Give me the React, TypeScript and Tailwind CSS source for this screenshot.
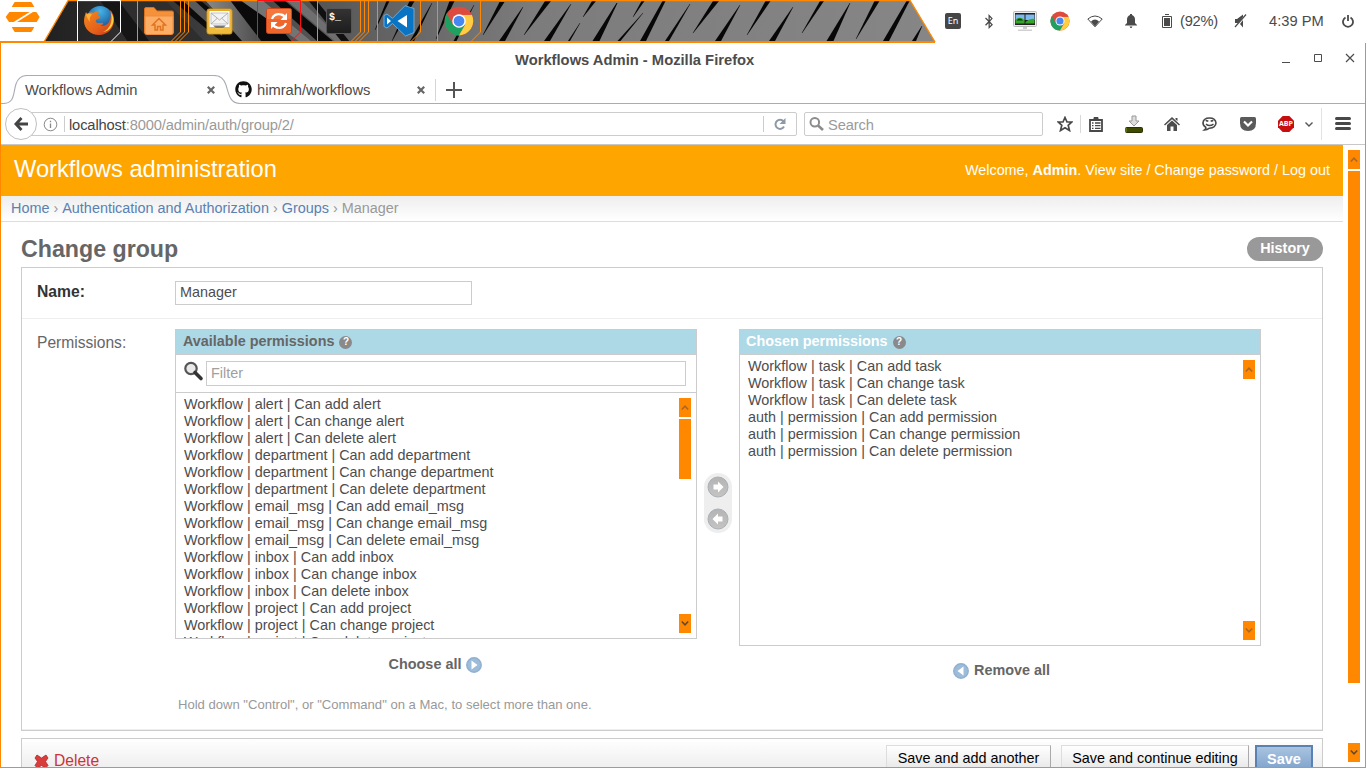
import React from "react";
import { FaBluetoothB, FaGithub } from "react-icons/fa";

const AVAILABLE = [
  "alert | Can add alert",
  "alert | Can change alert",
  "alert | Can delete alert",
  "department | Can add department",
  "department | Can change department",
  "department | Can delete department",
  "email_msg | Can add email_msg",
  "email_msg | Can change email_msg",
  "email_msg | Can delete email_msg",
  "inbox | Can add inbox",
  "inbox | Can change inbox",
  "inbox | Can delete inbox",
  "project | Can add project",
  "project | Can change project",
  "project | Can delete project",
].map((p) => "Workflow | " + p);

const CHOSEN = [
  "Workflow | task | Can add task",
  "Workflow | task | Can change task",
  "Workflow | task | Can delete task",
  "auth | permission | Can add permission",
  "auth | permission | Can change permission",
  "auth | permission | Can delete permission",
];

/* x at the bottom, y at the bottom, x at the top, y at the top, width at the bottom, width at the top */
const SLITS: number[][] = [
  [502, 41, 523, 7, 6, 0.5],
  [524, 35, 548, 1, 0.5, 6],
  [547, 41, 571, 4, 6, 0.5],
  [583, 17, 594, 1, 0.5, 4],
  [569, 41, 580, 23, 2, 0.5],
  [596, 41, 617, 3, 7, 1],
  [633, 17, 643, 1, 0.5, 3],
  [619, 41, 643, 13, 3, 0.5],
  [643, 41, 664, 1, 6, 3],
  [667, 41, 690, 4, 4, 0.5],
  [693, 33, 716, 1, 0.5, 6],
  [718, 41, 740, 5, 6, 0.5],
  [747, 35, 768, 1, 0.5, 5],
  [772, 41, 793, 7, 6, 0.5],
  [802, 33, 822, 1, 0.5, 4],
  [830, 41, 850, 3, 7, 0.5],
  [856, 39, 877, 1, 0.5, 5],
  [886, 41, 908, 1, 6, 3],
  [914, 41, 922, 26, 4, 0.5],
  [483, 35, 502, 2, 0.5, 5],
  [455, 41, 474, 5, 3, 0.5],
  [436, 39, 452, 1, 0.5, 5],
  [412, 41, 432, 3, 4, 0.5],
  [392, 41, 412, 1, 0.5, 5],
  [375, 30, 388, 1, 0.5, 3],
];

function Wallpaper() {
  return (
    <svg className="absolute inset-0" width="936" height="43" viewBox="0 0 936 43">
      <defs>
        <linearGradient id="wall" x1="0" x2="1" y1="0" y2="0">
          <stop offset="0" stopColor="#202020" />
          <stop offset="0.18" stopColor="#3c3c3c" />
          <stop offset="0.36" stopColor="#5f5f5f" />
          <stop offset="0.55" stopColor="#7c7c7c" />
          <stop offset="1" stopColor="#868686" />
        </linearGradient>
        <linearGradient id="band" x1="0" x2="1" y1="0" y2="0">
          <stop offset="0" stopColor="#8a8a8a" />
          <stop offset="1" stopColor="#4a4a4a" />
        </linearGradient>
      </defs>
      <polygon points="68.5,0 910,0 935,42 44,42" fill="url(#wall)" />
      <g>
        <polygon points="120,0 165,0 205,42 150,42" fill="#2e2e2e" />
        <polygon points="100,0 118,0 150,42 128,42" fill="#151515" />
        <polygon points="172,0 200,0 250,42 222,42" fill="#0c0c0c" />
        <polygon points="182,0 194,0 222,26 222,36" fill="#5a5a5a" />
        <polygon points="205,0 230,0 262,42 243,42" fill="url(#band)" />
        <polygon points="230,0 258,0 292,42 262,42" fill="#0a0a0a" />
        <polygon points="240,0 262,0 312,42 300,42" fill="#747474" />
        <polygon points="272,0 284,0 334,42 318,42" fill="#0a0a0a" />
        <polygon points="286,0 300,0 345,42 336,42" fill="#6f6f6f" />
        <polygon points="308,0 316,0 350,42 342,42" fill="#101010" />
      </g>
      {SLITS.map(([xb, yb, xt, yt, wb, wt], i) => (
        <polygon
          key={i}
          fill="#070707"
          points={`${xb - wb / 2},${yb} ${xb + wb / 2},${yb} ${xt + wt / 2},${yt} ${xt - wt / 2},${yt}`}
        />
      ))}
      <path d="M0 42H935" stroke="#ff8800" strokeWidth="2" />
      <path d="M68 0.5H910L935 42" stroke="#ff8800" strokeWidth="1.4" fill="none" />
      <path d="M68.5 0L44 42" stroke="#ff8800" strokeWidth="1.4" />
    </svg>
  );
}

function ZorinLogo() {
  return (
    <svg width="36" height="30" viewBox="0 0 108 90" className="mt-[2px] ml-[5px] shrink-0">
      <g fill="#ff8800">
        <path d="M29 0H79L88 15H20z" />
        <path d="M13 30H74L26 60H12L2 45z" />
        <path d="M84 30H94L104 45L95 60H36z" />
        <path d="M20 75H88L79 90H29z" />
      </g>
    </svg>
  );
}

function Frame({ color, copies = 1, children }: { color: string; copies?: number; children: React.ReactNode }) {
  return (
    <div className="relative flex h-[42px] w-[60px] shrink-0 items-start">
      <svg width="60" height="42" viewBox="0 0 60 42" className="absolute inset-0" fill="none" stroke={color}>
        <path d={copies > 1 ? "M0.5 0V41" : "M0.5 41V0.5H43.5V32L34 41.5"} />
        {copies > 1 && <path d="M43.5 0V32L34 41.5M47.5 0V32L38 41.5M51.5 0V32L42 41.5" />}
      </svg>
      <div className="relative flex h-[42px] w-[44px] items-center justify-center">{children}</div>
    </div>
  );
}

function FirefoxIcon() {
  return (
    <svg width="32" height="32" viewBox="0 0 32 32" className="mb-[2px]">
      <defs>
        <radialGradient id="ffb" cx="0.5" cy="0.2" r="0.8">
          <stop offset="0" stopColor="#45b5e8" />
          <stop offset="1" stopColor="#123f86" />
        </radialGradient>
        <linearGradient id="ffo" x1="0" y1="0" x2="1" y2="1">
          <stop offset="0" stopColor="#f58a1c" />
          <stop offset="0.6" stopColor="#e5601a" />
          <stop offset="1" stopColor="#c8341c" />
        </linearGradient>
      </defs>
      <circle cx="17" cy="15" r="13" fill="url(#ffb)" />
      <path d="M3 8C2 11 1 14 1 17C1 25 8 31 16 31C24.500 31 31 24.500 31 16C31 12 29.500 8 27 6C28.500 10 28 14 26.500 17C25 21 21 22.500 17.500 21.500C20 21 20.500 19.500 20 19C18 18 16 20 13.500 18.500C12.500 17.500 12.500 16.500 13.500 15.500L17 14C17.500 12.500 17 11.500 15.500 11.500C14.500 10 15 9 16.500 7.500C14 7 12 7.500 10.500 9C9 8.300 6 8.500 5 10C4 9.500 3.500 9 3 8z" fill="url(#ffo)" />
      <path d="M28 9C30 17 27 25 20 28C26 27.500 30.500 22 30.500 16C30.500 13 29.500 10.500 28 9z" fill="#ffcf3e" />
      <path d="M3 11C4 9.500 7 9 9 10.500C7 12 6 15 7 18C5 16 4 13 3 11z" fill="#fbb03b" />
    </svg>
  );
}

function FolderIcon() {
  return (
    <svg width="30" height="30" viewBox="0 0 30 30">
      <path d="M0.500 3Q0.500 1.500 2 1.500H10L13 5H28Q29.500 5 29.500 6.500V27H0.500z" fill="#f4913a" stroke="#d9701c" />
      <path d="M1 10H29V27Q29 28.500 27.500 28.500H2.500Q1 28.500 1 27z" fill="#fcae66" stroke="#ee8a3c" />
      <path d="M15 12.500L8.500 19H11V24H13.500V20.500H16.500V24H19V19H21.500z" fill="none" stroke="#df7420" strokeWidth="1.500" />
    </svg>
  );
}

function MailIcon() {
  return (
    <svg width="27" height="27" viewBox="0 0 27 27">
      <rect x="1" y="1" width="25" height="25" rx="2" fill="#f7c95a" stroke="#c98d13" />
      <rect x="3" y="2.500" width="21" height="17" fill="#fff" stroke="#e8a820" />
      <path d="M5 5H22V16H5z" fill="#f3f3f3" stroke="#c5c5c5" />
      <path d="M5 5L13.500 12L22 5M5 16L11 10.500M22 16L16 10.500" fill="none" stroke="#b0b0b0" />
      <path d="M2 19H8L10 21.500H17L19 19H25V25H2z" fill="#efbb3d" />
      <path d="M7 17.500H20L17 20H10z" fill="#777" />
    </svg>
  );
}

function SyncIcon() {
  return (
    <svg width="26" height="26" viewBox="0 0 26 26">
      <rect x="0.500" y="0.500" width="25" height="25" rx="2" fill="#f0652b" stroke="#c9471a" />
      <path d="M1 1H25V11H1z" fill="#f88a52" opacity="0.500" />
      <g fill="none" stroke="#fff" strokeWidth="2.300">
        <path d="M6 11C7 7 11 5.500 15 6.500Q17.500 7 19 9" />
        <path d="M20 15C19 19 15 20.500 11 19.500Q8.500 19 7 17" />
      </g>
      <path d="M21 5V12H14.500zM5 21V14H11.500z" fill="#fff" />
    </svg>
  );
}

function TerminalIcon() {
  return (
    <div className="flex h-[26px] w-[26px] items-start rounded-[2px] border border-[#555] bg-gradient-to-b from-[#333] to-[#1d1d1d] pl-[2px] pt-[3px] font-['Liberation_Mono',monospace] text-[10px] leading-[11px] font-bold text-white">
      $_
    </div>
  );
}

function VsCodeIcon() {
  return (
    <svg width="32" height="32" viewBox="0 0 32 32">
      <path d="M22 0.700L31 3.500V27.500L22.500 31L9.500 18.500L4 23L1 21.500V10.500L4 9L9.500 13.300z" fill="#0a74c4" stroke="#7db6df" strokeWidth="0.800" />
      <path d="M4 12.500V19.500L8 16zM14.500 16L24 10V22.500z" fill="#fff" />
    </svg>
  );
}

function ChromeIcon({ size }: { size: number }) {
  return (
    <svg width={size} height={size} viewBox="0 0 48 48">
      <circle cx="24" cy="24" r="23" fill="#dd4b3e" />
      <path d="M4.500 12A23 23 0 0 0 24 47L34 29.500L24 24L14 29.500z" fill="#1da160" />
      <path d="M24 47A23 23 0 0 0 44.500 14H24L34 29.500z" fill="#ffcd42" />
      <path d="M24 14H44.500Q43 11 41 9L24 11z" fill="#dd4b3e" />
      <circle cx="24" cy="24" r="10.800" fill="#fff" />
      <circle cx="24" cy="24" r="8.600" fill="#4688f1" />
    </svg>
  );
}

function Tray() {
  return (
    <div className="flex h-[42px] items-center text-[#4a4a4a]">
      <div className="ml-[9px] flex h-4 w-4 items-center justify-center rounded-[2px] bg-[#464646] font-['Noto_Sans',sans-serif] text-[9px] text-white">
        En
      </div>
      <FaBluetoothB size={15} className="ml-[20px] w-[16px]" />
      <svg width="24" height="20" viewBox="0 0 24 20" className="ml-[16px]">
        <rect x="0.500" y="0.500" width="23" height="15" rx="1" fill="#ececec" stroke="#b9b9b9" />
        <rect x="2" y="2" width="20" height="12" fill="#222" />
        <path d="M2.500 3.500H11.500V9H2.500zM12.500 3.500H21.500V9H12.500z" fill="#7fb9f2" />
        <path d="M2.500 8.500Q7 5 11.500 9V12.500H2.500zM12.500 11Q17 7 21.500 8V12.500H12.500z" fill="#35a52b" />
        <path d="M4 9Q7 6 10 9.500H4z" fill="#0b420c" />
        <path d="M10 16H14V18H10z" fill="#ccc" />
        <path d="M5 18.500H19V20H5z" fill="#d0d0d0" />
      </svg>
      <div className="ml-[13px]"><ChromeIcon size={20} /></div>
      <svg width="16" height="13" viewBox="0 0 16 13" className="ml-[17px]" fill="none" stroke="#4a4a4a">
        <path d="M0.800 4Q8-2 15.200 4L8 11.800z" />
        <path d="M4 6.500Q8 2.500 12 6.500L8 11.500z" fill="#4a4a4a" stroke="none" />
      </svg>
      <svg width="12" height="14" viewBox="0 0 12 14" className="ml-[22px]" fill="#4a4a4a">
        <path d="M5 0H7V1Q10 2 10 5.500V9L12 11V11.500H0V11L2 9V5.500Q2 2 5 1zM4.500 12.500H7.500L6.500 14H5.500z" />
      </svg>
      <svg width="10" height="14" viewBox="0 0 10 14" className="ml-[25px]">
        <path d="M0.500 2.500H9.500V13.500H0.500zM3 0.500H7" fill="none" stroke="#4a4a4a" />
        <path d="M2 4H8V12H2z" fill="#4a4a4a" />
      </svg>
      <span className="ml-[8px] w-[38px] pt-px text-[14.7px] tracking-[-0.25px]">(92%)</span>
      <svg width="13" height="14" viewBox="0 0 13 14" className="ml-[16px]" fill="#4a4a4a">
        <path d="M1 5H3L9 0.500V3L4.500 9H1zM6 10L9 6V13.500z" />
        <path d="M12 0.500L1 13" stroke="#4a4a4a" strokeWidth="1.200" />
      </svg>
      <span className="ml-[22px] w-[58px] pt-px text-[14.7px] whitespace-nowrap">4:39 PM</span>
      <svg width="12" height="13" viewBox="0 0 12 13" className="ml-[15px] shrink-0" fill="none" stroke="#4a4a4a" strokeWidth="1.800">
        <path d="M3.500 2.500A5 5 0 1 0 8.500 2.500M6 0V6" />
      </svg>
    </div>
  );
}

function Panel() {
  return (
    <div className="relative flex h-[43px] shrink-0">
      <Wallpaper />
      <div className="relative flex h-[43px] w-[936px] shrink-0">
        <div className="flex w-[77px] shrink-0"><ZorinLogo /></div>
        <Frame color="#ffffff"><FirefoxIcon /></Frame>
        <Frame color="#ff8800" copies={3}><FolderIcon /></Frame>
        <Frame color="transparent"><MailIcon /></Frame>
        <Frame color="#ff1010"><SyncIcon /></Frame>
        <Frame color="#ff8800" copies={3}><TerminalIcon /></Frame>
        <Frame color="#ff8800"><VsCodeIcon /></Frame>
        <Frame color="#ff8800"><ChromeIcon size={30} /></Frame>
      </div>
      <Tray />
    </div>
  );
}

function TitleBar() {
  return (
    <div className="flex h-[32px] shrink-0 items-center pl-[514px] text-[#4c4c4c]">
      <span className="w-[766px] pt-[2px] text-[14.75px] font-bold">Workflows Admin - Mozilla Firefox</span>
      <svg width="74" height="12" viewBox="0 0 74 12" className="mb-[2px]" fill="none" stroke="#4c4c4c">
        <path d="M1 10.500H9M33.500 2.500H40.500V9.500H33.500z" />
        <path d="M65 2L73 10M73 2L65 10" strokeWidth="1.200" />
      </svg>
    </div>
  );
}

function CloseX() {
  return (
    <svg width="8" height="8" viewBox="0 0 8 8" stroke="#666" strokeWidth="2.200">
      <path d="M0.800 0.800L7.200 7.200M7.200 0.800L0.800 7.200" />
    </svg>
  );
}

function TabStrip() {
  return (
    <div className="relative flex h-[29px] shrink-0 items-center text-[14.7px] text-[#4c4c4c]">
      <svg width="1364" height="29" viewBox="0 0 1364 29" className="absolute inset-0" fill="none" stroke="#a9adb3" strokeWidth="1.100">
        <path d="M0 28.500H2C14 28.500 12 18 15 9Q18 0.500 26 0.500H213Q222 0.500 225 10C228 20 229 28.500 239 28.500H1364" />
      </svg>
      <span className="relative ml-[24px] w-[182px] pt-[2px]">Workflows Admin</span>
      <CloseX />
      <FaGithub size={17} color="#111" className="relative ml-[20px]" />
      <span className="relative ml-[5px] w-[160px] pt-[2px]">himrah/workflows</span>
      <CloseX />
      <div className="ml-[10px] h-[22px] w-px bg-[#d5d5d5]" />
      <svg width="16" height="16" viewBox="0 0 16 16" className="ml-[10px]" stroke="#555" strokeWidth="2">
        <path d="M0 8H16M8 0V16" />
      </svg>
    </div>
  );
}

function NavBar() {
  return (
    <div className="flex h-[41px] shrink-0 items-center border-b border-[#c8c8c8] text-[14.7px] text-[#9a9a9a]">
      <div className="relative z-10 ml-[4px] flex h-8 w-8 shrink-0 items-center justify-center rounded-full border border-[#bfbfbf] bg-white">
        <svg width="14" height="14" viewBox="0 0 14 14" fill="none" stroke="#444" strokeWidth="2.800">
          <path d="M7.500 1L1.900 7L7.500 13M2 7H14" />
        </svg>
      </div>
      <div className="-ml-[6px] flex h-[24px] w-[766px] shrink-0 items-center rounded-r-[2px] border border-[#ccc] pl-[11px]">
        <svg width="15" height="15" viewBox="0 0 15 15" fill="none" stroke="#888">
          <circle cx="7.500" cy="7.500" r="6.300" />
          <path d="M7.500 6.500V11M7.500 3.800V5.200" strokeWidth="1.300" />
        </svg>
        <div className="ml-[6px] h-4 w-px bg-[#ccc]" />
        <span className="ml-[4px] w-[694px] pt-[2px] tracking-[-0.14px]"><span className="text-[#444]">localhost</span>:8000/admin/auth/group/2/</span>
        <div className="h-4 w-px shrink-0 bg-[#ccc]" />
        <svg width="12" height="12" viewBox="0 0 12 12" className="ml-[10px] shrink-0" fill="none" stroke="#8d99a6" strokeWidth="2">
          <path d="M9.500 3.500A4.500 4.500 0 1 0 10 8.500" />
          <path d="M11.500 0V6H5.500z" fill="#8d99a6" stroke="none" />
        </svg>
      </div>
      <div className="ml-[7px] flex h-[24px] w-[239px] shrink-0 items-center rounded-[2px] border border-[#ccc] pl-[4px]">
        <svg width="15" height="14" viewBox="0 0 15 14" fill="none" stroke="#8c8c8c">
          <circle cx="5.800" cy="5.300" r="4.300" strokeWidth="2" />
          <path d="M9 8.500L14 13" strokeWidth="2.600" />
        </svg>
        <span className="ml-[4px] pt-[2px] tracking-[-0.1px]">Search</span>
      </div>
      <svg width="16" height="16" viewBox="0 0 16 16" className="ml-[14px] shrink-0" fill="none" stroke="#484848" strokeWidth="1.700">
        <path d="M8 1.500L10 6H14.800L11.200 9.300L12.500 14.500L8 11.700L3.500 14.500L4.800 9.300L1.200 6H6z" />
      </svg>
      <div className="ml-[7px] h-[18px] w-px bg-[#d8d8d8]" />
      <svg width="14" height="15" viewBox="0 0 14 15" className="ml-[8px] shrink-0" fill="none" stroke="#484848">
        <path d="M1 3H13V14H1z" strokeWidth="1.800" />
        <path d="M5 0.500H9V3H5z" fill="#484848" />
        <path d="M3 6H4.500M6 6H11.500M3 8.700H4.500M6 8.700H11.500M3 11.300H4.500M6 11.300H11.500" strokeWidth="1.300" />
      </svg>
      <svg width="18" height="18" viewBox="0 0 18 18" className="ml-[22px] shrink-0">
        <path d="M7 1H11V6H14L9 11L4 6H7z" fill="#ddd" stroke="#999" />
        <rect x="0.500" y="12.500" width="17" height="5" rx="1" fill="#3f4a00" stroke="#293300" />
        <path d="M1 13V17" stroke="#7aa028" />
      </svg>
      <svg width="16" height="14" viewBox="0 0 16 14" className="ml-[21px] shrink-0" fill="#4d4d4d">
        <path d="M8 0L16 7.500L15 8.500L8 2.200L1 8.500L0 7.500z" />
        <path d="M8 3.500L13 8V14H9.500V9.500H6.500V14H3V8zM11.500 1H13.500V4L11.500 2.500z" />
      </svg>
      <svg width="15" height="14" viewBox="0 0 15 14" className="ml-[22px] shrink-0" fill="none" stroke="#484848">
        <path d="M3.500 10Q0.900 8.500 1 5.800Q1.500 1 7.500 1T14 6Q13.500 10.800 7.500 11.200Q5 13 2.500 13Q4.500 11.500 3.500 10z" strokeWidth="1.600" />
        <path d="M4 7.200Q7.500 10 11.500 7.200" strokeWidth="1.500" />
        <path d="M3.800 4.200Q5 3 6.200 4.500M8.800 4.500Q10 3 11.200 4.200" strokeWidth="1.600" />
      </svg>
      <svg width="16" height="14" viewBox="0 0 16 14" className="ml-[23px] shrink-0">
        <path d="M1.500 0H14.500Q16 0 16 1.500V6Q16 14 8 14T0 6V1.500Q0 0 1.500 0z" fill="#5a5a5a" />
        <path d="M4 4.500L8 8.500L12 4.500" fill="none" stroke="#fff" strokeWidth="2.200" />
      </svg>
      <div className="relative ml-[22px] h-4 w-4 shrink-0">
        <svg width="16" height="16" viewBox="0 0 16 16" className="absolute inset-0">
          <path d="M4.700 0H11.300L16 4.700V11.300L11.300 16H4.700L0 11.300V4.700z" fill="#c70d0d" />
        </svg>
        <span className="absolute inset-0 flex items-center justify-center font-['Open_Sans',sans-serif] text-[7px] font-bold text-white">ABP</span>
      </div>
      <svg width="8" height="5" viewBox="0 0 8 5" className="ml-[11px] shrink-0" fill="none" stroke="#555" strokeWidth="1.400">
        <path d="M0.500 0.500L4 4L7.500 0.500" />
      </svg>
      <div className="ml-[8px] h-[32px] w-px shrink-0 bg-[#e2e2e2]" />
      <div className="mb-px ml-[13px] flex w-4 shrink-0 flex-col gap-[2px]">
        <div className="h-[3px] rounded-sm bg-[#484848]" />
        <div className="h-[3px] rounded-sm bg-[#484848]" />
        <div className="h-[3px] rounded-sm bg-[#484848]" />
      </div>
    </div>
  );
}

function ScrollButton({ down = false, active = false }: { down?: boolean; active?: boolean }) {
  return (
    <div className="flex h-[19px] w-[12px] shrink-0 items-center justify-center bg-[#ff8800]">
      <svg width="8" height="5" viewBox="0 0 8 5" fill="none" stroke={active ? "#5f4a30" : "#a8682c"} strokeWidth="1.500">
        <path d={down ? "M0.800 0.500L4 3.800L7.200 0.500" : "M0.800 4.500L4 1.200L7.200 4.500"} />
      </svg>
    </div>
  );
}

function HelpDot() {
  return (
    <span className="ml-[5px] flex h-[13px] w-[13px] items-center justify-center rounded-full bg-[#8a8a8a] text-[10px] leading-none font-bold text-white">?</span>
  );
}

function PermissionList({ items }: { items: string[] }) {
  return (
    <ul className="min-w-0 flex-1 pt-[3px] pl-[8px] text-[14.4px] leading-[17px] whitespace-nowrap text-[#4d4d4d]">
      {items.map((item) => (
        <li key={item} className="h-[17px]">{item}</li>
      ))}
    </ul>
  );
}

function ArrowBall({ left = false }: { left?: boolean }) {
  return (
    <svg width="22" height="22" viewBox="0 0 22 22" className={left ? "-scale-x-100" : ""}>
      <defs>
        <linearGradient id="ball" x1="0" y1="0" x2="0" y2="1">
          <stop offset="0" stopColor="#b4b4b4" />
          <stop offset="1" stopColor="#c4c4c4" />
        </linearGradient>
      </defs>
      <circle cx="11" cy="11" r="10" fill="url(#ball)" stroke="#a9b0b5" />
      <path d="M6.500 8.500H11V5.500L16.500 11L11 16.500V13.500H6.500z" fill="#fff" />
    </svg>
  );
}

function BlueBall({ left = false }: { left?: boolean }) {
  return (
    <svg width="16" height="16" viewBox="0 0 16 16" className={left ? "-scale-x-100" : ""}>
      <circle cx="8" cy="8" r="7.200" fill="#9dbcd9" stroke="#8fb0d0" strokeWidth="1.500" />
      <path d="M5.500 3.500L11.500 8L5.500 12.500z" fill="#fff" />
    </svg>
  );
}

function Selector() {
  return (
    <div className="flex items-start text-[14.4px]">
      <div className="flex w-[522px] flex-col">
        <div className="flex h-[310px] flex-col border border-[#ccc]">
          <div className="flex h-[25px] shrink-0 items-center border-b border-[#ccc] bg-[#add8e6] pl-[7px] font-bold text-[#666]">
            <span className="mb-px">Available permissions</span>
            <HelpDot />
          </div>
          <div className="flex h-[38px] shrink-0 items-start border-b border-[#ccc] pt-[6px] pl-[7px]">
            <svg width="21" height="21" viewBox="0 0 21 21" className="shrink-0">
              <circle cx="8" cy="7.500" r="5.700" fill="#e9e9e9" stroke="#555" strokeWidth="2.200" />
              <path d="M12 11.500L18 17.500" stroke="#333" strokeWidth="3.600" strokeLinecap="round" />
            </svg>
            <div className="ml-[2px] flex h-[25px] w-[480px] items-center border border-[#ccc] pl-[4px] text-[#a0a0a0]">Filter</div>
          </div>
          <div className="flex min-h-0 flex-1 overflow-hidden">
            <PermissionList items={AVAILABLE} />
            <div className="flex h-[245px] flex-col pt-[5px] pr-[5px]">
              <ScrollButton />
              <div className="mt-[2px] h-[60px] w-[12px] bg-[#ff8800]" />
              <div className="mt-[135px]"><ScrollButton down active /></div>
            </div>
          </div>
        </div>
        <div className="flex h-[50px] items-center justify-center pt-px pr-px font-bold text-[#666]">
          <span>Choose all</span>
          <span className="ml-[5px] pt-px"><BlueBall /></span>
        </div>
        <p className="mt-[8px] pl-[3px] text-[13.07px] leading-4 text-[#999]">
          Hold down "Control", or "Command" on a Mac, to select more than one.
        </p>
      </div>
      <div className="mt-[144px] ml-[7px] flex h-[60px] w-[28px] flex-col items-center justify-between rounded-[14px] bg-[#eee] py-[3px]">
        <ArrowBall />
        <ArrowBall left />
      </div>
      <div className="ml-[7px] flex w-[522px] flex-col">
        <div className="flex h-[317px] flex-col border border-[#ccc]">
          <div className="flex h-[25px] shrink-0 items-center border-b border-[#ccc] bg-[#add8e6] pl-[6px] font-bold text-white">
            <span className="mb-px">Chosen permissions</span>
            <HelpDot />
          </div>
          <div className="flex min-h-0 flex-1">
            <PermissionList items={CHOSEN} />
            <div className="flex flex-col justify-between py-[5px] pr-[5px]">
              <ScrollButton />
              <ScrollButton down />
            </div>
          </div>
        </div>
        <div className="flex h-[48px] items-center justify-center pt-px pl-[3px] font-bold text-[#666]">
          <span className="mr-[5px] pt-px"><BlueBall left /></span>
          <span>Remove all</span>
        </div>
      </div>
    </div>
  );
}

function Sep() {
  return <span className="text-[#999]"> › </span>;
}

function AdminPage() {
  return (
    <div className="flex w-[1342px] shrink-0 flex-col overflow-hidden">
      <header className="flex h-[51px] shrink-0 items-center justify-between bg-[#ffa500] pr-[13px] pl-[13px] text-white">
        <h1 className="mb-px text-[23.7px]">Workflows administration</h1>
        <div className="text-[14.36px]">
          Welcome, <b>Admin</b>. View site / Change password / Log out
        </div>
      </header>
      <nav className="flex h-[26px] shrink-0 items-center border-b border-[#ddd] bg-gradient-to-b from-[#eeeeee] to-white pt-px pl-[10px] text-[14.42px] whitespace-pre text-[#5b80b2]">
        <span>Home</span><Sep /><span>Authentication and Authorization</span><Sep /><span>Groups</span><Sep />
        <span className="text-[#999]">Manager</span>
      </nav>
      <main className="flex shrink-0 flex-col pt-[15px] pr-[20px] pl-[20px]">
        <div className="flex h-[30px] items-start justify-between">
          <h2 className="text-[23.2px] leading-[24px] font-bold text-[#666]">Change group</h2>
          <div className="flex h-6 w-[76px] items-center justify-center rounded-full bg-[#999] pb-px text-[14.4px] font-bold text-white">History</div>
        </div>
        <section className="flex h-[464px] flex-col border border-[#ccc]">
          <div className="flex h-[51px] shrink-0 items-start border-b border-[#eee] pt-[13px] pl-[15px]">
            <span className="w-[138px] pt-px text-[15.7px] leading-5 font-bold text-[#333]">Name:</span>
            <div className="flex h-[24px] w-[297px] items-center border border-[#ccc] pl-[4px] text-[14.4px] text-[#4d4d4d]">Manager</div>
          </div>
          <div className="flex flex-1 items-start border-b border-[#eee] pt-[10px] pl-[15px]">
            <span className="w-[138px] pt-[4px] text-[15.6px] leading-5 text-[#666]">Permissions:</span>
            <Selector />
          </div>
        </section>
        <section className="mt-[7px] flex h-[46px] items-start border border-[#ccc] bg-gradient-to-b from-white to-[#e6e6e6] pt-[6px] pr-[9px] pl-[12px]">
          <div className="flex flex-1 items-center pt-[6px] text-[#cc3434]">
            <svg width="15" height="15" viewBox="0 0 15 15">
              <path d="M3 1L7.500 4L12 1L14 4L11.500 7.500L14 11.500L11.500 14L7.500 11.500L3.500 14L1 11.500L3.500 7.500L1 4z" fill="#d83c3c" stroke="#b02626" strokeWidth="0.800" />
            </svg>
            <span className="ml-[5px] text-[15.6px] leading-5">Delete</span>
          </div>
          <div className="flex h-9 w-[165px] items-start justify-center border border-[#ddd] border-r-[#aaa] bg-gradient-to-b from-white to-[#ddd] pt-[2px] text-[14.4px] text-black">Save and add another</div>
          <div className="ml-[10px] flex h-9 w-[188px] items-start justify-center border border-[#ddd] border-r-[#aaa] bg-gradient-to-b from-white to-[#ddd] pt-[2px] text-[14.4px] text-black">Save and continue editing</div>
          <div className="ml-[6px] flex h-9 w-[58px] items-start justify-center border-2 border-[#5b80b2] bg-gradient-to-b from-[#a9c3e0] to-[#6d96c4] pt-[2px] text-[14.5px] font-bold text-white">Save</div>
        </section>
      </main>
    </div>
  );
}

export default function App() {
  return (
    <div className="flex h-[768px] w-[1366px] flex-col overflow-hidden bg-white font-['Liberation_Sans',Arial,sans-serif]">
      <Panel />
      <div className="flex min-h-0 flex-1 flex-col overflow-hidden border-x border-b border-[#ff8800]">
        <TitleBar />
        <TabStrip />
        <NavBar />
        <div className="flex min-h-0 flex-1 overflow-hidden">
          <AdminPage />
          <div className="flex flex-col pt-[5px] pl-[5px]">
            <ScrollButton />
            <div className="mt-[2px] h-[512px] w-[12px] shrink-0 bg-[#ff8800]" />
            <div className="mt-[60px]"><ScrollButton down active /></div>
          </div>
        </div>
      </div>
    </div>
  );
}
